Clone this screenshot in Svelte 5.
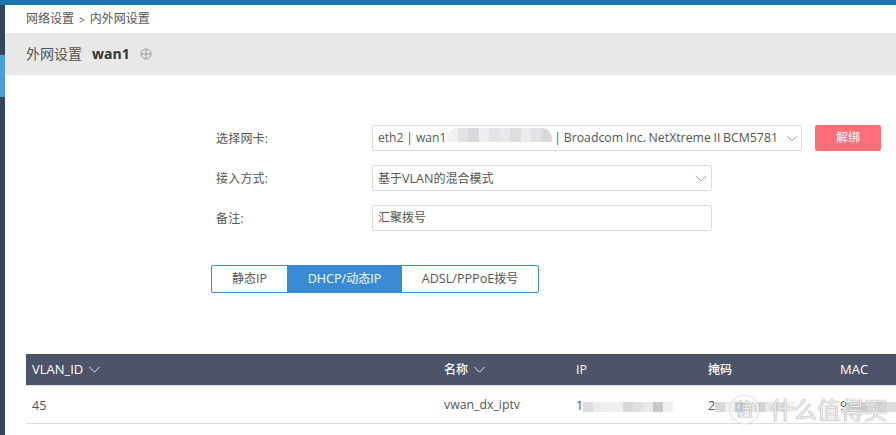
<script>
  const chevron = "M1 1l6 6 6-6";
  const ipBlur = ["#dcdcdc","#ececec","#eeeeee","#f0f0f0","#d9d6d6","#e0e0e0","#ebe8e6","#c8c8c8","#eef0f4"];
  const maskBlur = ["#d8d8d8","#eeeeee","#cccccc","#e6e6e6","#d2d2d2","#e8e8e8","#dddddd","#f0f0f0"];
  const macBlur = ["#d8d8d8","#cfcfcf","#e2e2e2","#d6d6d6","#dddddd"];
  const nicBlur = ["#f2f2f2","#e3e3e3","#d9d9de","#eceef0","#e4e4e8","#e9e9ec","#dedee2","#ececec","#e2e2e6","#d8d8dc"];
</script>

<div class="page">
  <div class="topbar"></div>
  <div class="body">
    <aside class="side">
      <div class="side-top"></div>
      <div class="side-active"></div>
      <div class="side-rest"></div>
    </aside>
    <main class="main">
      <div class="crumb"><span>网络设置</span><span class="sep">&gt;</span><span>内外网设置</span></div>
      <div class="band">
        <span class="band-title">外网设置</span>
        <b class="band-name">wan1</b>
        <svg class="plus" width="12" height="12" viewBox="0 0 12 12"><circle cx="6" cy="6" r="5" /><path d="M1 6h10M6 1v10" /></svg>
      </div>

      <form class="form">
        <div class="row">
          <label for="nic">选择网卡:</label>
          <div class="field wide" id="nic">
            <span class="val first">eth2 | wan1</span>
            <span class="blur nic">{#each nicBlur as c}<i style:background={c}></i>{/each}</span>
            <span class="val rest">| Broadcom Inc. NetXtreme II BCM5781</span>
            <svg class="chev" width="12" height="7" viewBox="0 0 14 8"><path d={chevron} /></svg>
          </div>
          <button type="button" class="unbind">解绑</button>
        </div>
        <div class="row">
          <label for="mode">接入方式:</label>
          <div class="field" id="mode">
            <span class="val">基于<span class="lat">VLAN</span>的混合模式</span>
            <svg class="chev end" width="12" height="7" viewBox="0 0 14 8"><path d={chevron} /></svg>
          </div>
        </div>
        <div class="row">
          <label for="note">备注:</label>
          <div class="field" id="note"><span class="val">汇聚拨号</span></div>
        </div>
      </form>

      <div class="tabs">
        <div class="tab t1">静态<span class="lat">IP</span></div>
        <div class="tab t2 on"><span class="lat">DHCP/</span>动态<span class="lat">IP</span></div>
        <div class="tab t3"><span class="lat">ADSL/PPPoE</span>拨号</div>
      </div>

      <div class="table">
        <div class="tr head">
          <div class="c c1"><span class="lat big">VLAN_ID</span> <svg class="chev w" width="13" height="7" viewBox="0 0 14 8"><path d={chevron} /></svg></div>
          <div class="c c2">名称 <svg class="chev w" width="13" height="7" viewBox="0 0 14 8"><path d={chevron} /></svg></div>
          <div class="c c3"><span class="lat">IP</span></div>
          <div class="c c4">掩码</div>
          <div class="c c5"><span class="lat big">MAC</span></div>
        </div>
        <div class="tr data">
          <div class="c c1"><span class="lat">45</span></div>
          <div class="c c2"><span class="cellname">vwan_dx_iptv</span></div>
          <div class="c c3"><span class="lat">1</span><span class="blur cell">{#each ipBlur as c}<i style:background={c}></i>{/each}</span></div>
          <div class="c c4"><span class="lat">2</span><span class="blur cell">{#each maskBlur as c}<i style:background={c}></i>{/each}</span></div>
          <div class="c c5"><span class="lat">9</span><span class="blur cell">{#each macBlur as c}<i style:background={c}></i>{/each}</span></div>
        </div>
      </div>
    </main>
  </div>
  <div class="mark"><span class="seal">值</span><span class="brand">什么值得买</span></div>
</div>

<style>
  :global(body) { margin: 0; background: #fff; overflow: hidden; }
  .page {
    position: relative; width: 896px; height: 435px; overflow: hidden;
    font: 12px/1.2 "Open Sans", "Noto Sans CJK SC", sans-serif; color: #555;
  }
  .lat { font-size: 12.6px; }
  .lat.big { font-size: 13px; }
  .cellname { font-size: 12.3px; }
  .topbar { height: 5px; background: #1b75b3; }
  .body { display: flex; height: 430px; }
  .side { width: 5px; flex: none; display: flex; flex-direction: column; }
  .side-top { height: 50px; background: #34465a; }
  .side-active { height: 42px; background: #4a9fd8; }
  .side-rest { flex: 1; background: #34465a; }
  .main { flex: 1; min-width: 0; }
  .crumb { height: 27px; padding: 0 0 0 21px; display: flex; align-items: center; gap: 5px; font-size: 12px; color: #555; }
  .crumb span { position: relative; top: 1px; }
  .sep { font-size: 10px; }
  .band {
    margin-top: 1px; height: 42px; background: #e8e8e8;
    display: flex; align-items: center; padding-left: 21px;
  }
  .band-title { font-size: 14px; color: #555; }
  .band-name { margin-left: 10px; font-size: 14px; color: #333; font-weight: 700; }
  .plus { margin-left: 10px; }
  .plus circle, .plus path { fill: none; stroke: #999; stroke-width: 1; }

  .form { margin: 50px 0 0 211px; display: flex; flex-direction: column; gap: 14px; }
  .row { display: flex; align-items: center; height: 26px; }
  label { width: 156px; flex: none; color: #555; font-size: 12px; padding-top: 2px; box-sizing: border-box; letter-spacing: .2px; }
  .field {
    position: relative; box-sizing: border-box; width: 340px; height: 26px;
    border: 1px solid #ddd; border-radius: 2px; padding-left: 5px; padding-top: 1px;
    display: flex; align-items: center; white-space: nowrap; overflow: hidden; background: #fff;
  }
  .field.wide { width: 430px; }
  .val { color: #555; flex: none; }
  .first { font-size: 12px; }
  .rest { margin-left: 2px; width: 224px; overflow: hidden; font-size: 12.3px; word-spacing: -.5px; }
  .chev { fill: none; }
  .chev path { fill: none; stroke: #999; stroke-width: 1; }
  .field .chev { margin-left: 8px; flex: none; }
  .field .chev.end { margin-left: auto; margin-right: 4px; }
  .chev.w path { stroke: #fff; }
  .unbind {
    margin-left: 13px; width: 66px; height: 26px; border: 0; border-radius: 2px;
    background: #ff6f77; color: #fff; font: inherit; padding: 0;
  }
  .blur { display: inline-flex; height: 12px; flex: none; }
  .blur i { display: block; width: 10px; height: 100%; }
  .blur.nic { margin-left: 1px; height: 21px; width: 105px; border-radius: 10px; overflow: hidden; }
  .blur.nic i { flex: 1; height: 14px; }
  .blur.cell { vertical-align: middle; height: 10px; margin-left: 0; }

  .tabs {
    margin: 34px 0 0 206px; width: 328px; height: 28px; box-sizing: border-box;
    border: 1px solid #3a8bd6; border-radius: 2px; display: flex;
  }
  .tab { display: flex; align-items: center; justify-content: center; font-size: 12px; color: #555; }
  .t1 { width: 75px; }
  .t2 { width: 115px; }
  .t3 { flex: 1; }
  .tab.on { background: #3a8bd6; color: #fff; }

  .table { margin: 61px 0 0 21px; }
  .tr { display: flex; align-items: center; }
  .head { height: 32px; box-sizing: border-box; background: #4d5469; color: #fff; border-bottom: 1px solid #ddd; font-weight: 500; padding-top: 1px; }
  .data { height: 38px; box-sizing: border-box; border-bottom: 1px solid #ddd; color: #555; padding-top: 2px; }
  .c { flex: none; white-space: nowrap; box-sizing: border-box; padding-left: 6px; overflow: hidden; }
  .c1 { width: 412px; }
  .c2 { width: 132px; }
  .c3 { width: 132px; }
  .c4 { width: 132px; }
  .c5 { width: 65px; }
  .c svg { margin-left: 2px; vertical-align: 1px; }

  .mark {
    position: absolute; left: 730px; top: 395px; display: flex; align-items: center; gap: 11px;
    white-space: nowrap;
  }
  .brand { font-size: 23.5px; line-height: 28px; color: rgba(244,244,244,.95); text-shadow: 0 0 1px rgba(90,90,90,.9); }
  .seal {
    box-sizing: border-box; width: 29px; height: 29px; border: 2px solid rgba(244,244,244,.95); border-radius: 50%;
    box-shadow: 0 0 1px rgba(90,90,90,.8);
    display: flex; align-items: center; justify-content: center; font-size: 18px;
    color: rgba(244,244,244,.95); text-shadow: 0 0 1px rgba(90,90,90,.9);
  }
</style>
